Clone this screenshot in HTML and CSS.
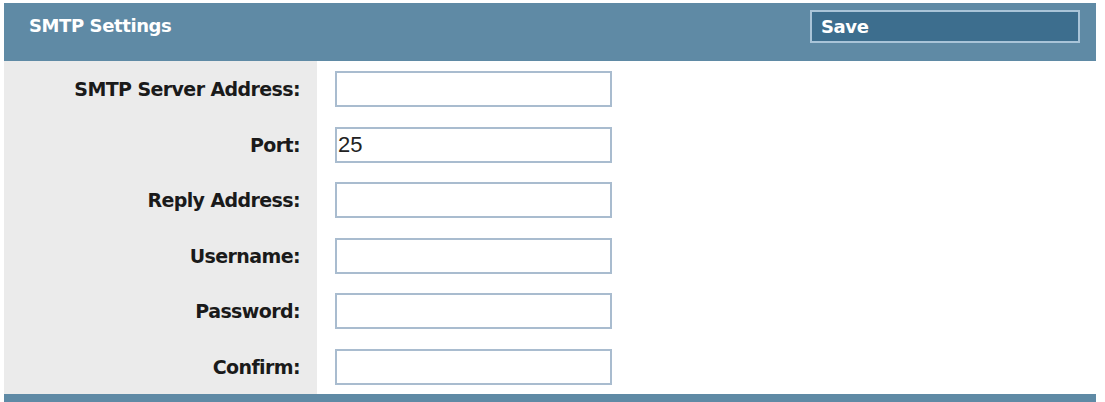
FILE: index.html
```html
<!DOCTYPE html>
<html>
<head>
<meta charset="utf-8">
<link rel="stylesheet" href="styles.css">
</head>
<body>
<div class="panel">
  <div class="header">
    <div class="title">SMTP Settings</div>
    <button class="save">Save</button>
  </div>
  <div class="form">
    <div class="row"><div class="label">SMTP Server Address:</div><div class="field"><input class="input" type="text" value=""></div></div>
    <div class="row"><div class="label">Port:</div><div class="field"><input class="input" type="text" value="25"></div></div>
    <div class="row"><div class="label">Reply Address:</div><div class="field"><input class="input" type="text" value=""></div></div>
    <div class="row"><div class="label">Username:</div><div class="field"><input class="input" type="text" value=""></div></div>
    <div class="row"><div class="label">Password:</div><div class="field"><input class="input" type="password" value=""></div></div>
    <div class="row"><div class="label">Confirm:</div><div class="field"><input class="input" type="password" value=""></div></div>
  </div>
  <div class="footer"></div>
</div>
</body>
</html>
```
FILE: styles.css
```css
html, body {
  margin: 0;
  padding: 0;
  background: #ffffff;
}
body {
  padding: 3px 9px 0 4px;
  font-family: "DejaVu Sans", Verdana, sans-serif;
}
.panel {
  display: flex;
  flex-direction: column;
}
.header {
  height: 58px;
  background: #5f8aa5;
  display: flex;
  align-items: flex-start;
  justify-content: space-between;
  padding: 0 16px 0 25px;
}
.title {
  color: #ffffff;
  font-weight: bold;
  font-size: 18px;
  margin-top: 12px;
  letter-spacing: -0.4px;
}
.save {
  margin-top: 7px;
  width: 270px;
  height: 33px;
  background: #3d6e8e;
  border: 2px solid #a9c4d8;
  color: #ffffff;
  font-family: "DejaVu Sans", Verdana, sans-serif;
  font-weight: bold;
  font-size: 18px;
  letter-spacing: -0.4px;
  text-align: left;
  padding: 0 9px;
}
.form {
  display: flex;
  flex-direction: column;
  background: linear-gradient(to right, #ebebeb 313px, #ffffff 313px);
  padding: 10px 0 9px;
  gap: 19.5px;
}
.row {
  display: flex;
  align-items: center;
  height: 36px;
}
.label {
  width: 296px;
  text-align: right;
  font-weight: bold;
  font-size: 19px;
  color: #1a1a1a;
  letter-spacing: -0.6px;
}
.field {
  padding-left: 35px;
}
.input {
  box-sizing: border-box;
  width: 277px;
  height: 36px;
  border: 2px solid #a9bccf;
  background: #ffffff;
  font-family: "Liberation Sans", Arial, sans-serif;
  font-size: 22px;
  color: #222;
  padding: 0 1px;
  margin: 0;
  outline: none;
}
.footer {
  height: 9px;
  background: #5f8aa5;
}
```
